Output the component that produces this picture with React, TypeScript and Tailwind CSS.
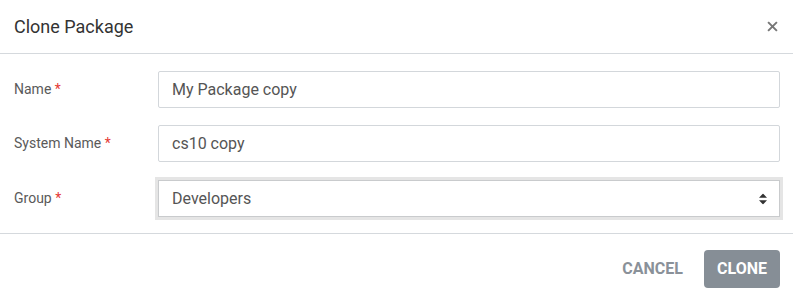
import { useState } from "react";

function Label({ text }: { text: string }) {
  return (
    <label className="w-[144px] shrink-0 text-[14px] text-[#5a5a5a]">
      {text} <span className="text-[#e53935]">*</span>
    </label>
  );
}

export default function App() {
  const [name, setName] = useState("My Package copy");
  const [systemName, setSystemName] = useState("cs10 copy");
  const [group, setGroup] = useState("Developers");

  return (
    <div className="flex h-[300px] w-[793px] flex-col bg-white font-['Roboto',sans-serif]">
      <div className="flex h-[54px] shrink-0 items-center justify-between border-b border-[#d5d9dd] pl-[14px] pr-[15px]">
        <h2 className="text-[18px] text-[#333]">Clone Package</h2>
        <button type="button" aria-label="Close" className="text-[#777]">
          <svg width="11" height="11" viewBox="0 0 10 10" aria-hidden="true">
            <path d="M1 1L9 9M9 1L1 9" stroke="currentColor" strokeWidth="1.8" />
          </svg>
        </button>
      </div>

      <div className="flex flex-col gap-[17px] pb-[16px] pl-[14px] pr-[13px] pt-[17px]">
        <div className="flex items-center">
          <Label text="Name" />
          <input
            value={name}
            onChange={(e) => setName(e.target.value)}
            className="h-[37px] flex-1 rounded-[2px] border border-[#d3d7db] px-[13px] text-[16px] text-[#555] outline-none"
          />
        </div>
        <div className="flex items-center">
          <Label text="System Name" />
          <input
            value={systemName}
            onChange={(e) => setSystemName(e.target.value)}
            className="h-[37px] flex-1 rounded-[2px] border border-[#d3d7db] px-[13px] text-[16px] text-[#555] outline-none"
          />
        </div>
        <div className="flex items-center pt-[1px]">
          <Label text="Group" />
          <div className="relative flex-1">
            <select
              value={group}
              onChange={(e) => setGroup(e.target.value)}
              className="h-[37px] w-full appearance-none border border-[#c9cbcd] bg-white px-[13px] text-[16px] text-[#555] shadow-[0_0_0_3px_#e5e5e5] outline-none"
            >
              <option>Developers</option>
              <option>Administrators</option>
            </select>
            <svg
              className="pointer-events-none absolute right-[13px] top-1/2 -translate-y-1/2"
              width="8"
              height="11"
              viewBox="0 0 8 11"
              aria-hidden="true"
            >
              <path d="M4 0L8 4.2H0Z M4 11L8 6.8H0Z" fill="#333" />
            </svg>
          </div>
        </div>
      </div>

      <div className="flex flex-1 items-start justify-end gap-[5px] border-t border-[#d5d9dd] pr-[13px] pt-[16px]">
        <button
          type="button"
          className="h-[38px] px-[16px] text-[16px] font-bold uppercase text-[#8a9199]"
        >
          Cancel
        </button>
        <button
          type="button"
          className="h-[38px] w-[76px] rounded-[4px] bg-[#868e96] text-[16px] font-bold uppercase text-white"
        >
          Clone
        </button>
      </div>
    </div>
  );
}
